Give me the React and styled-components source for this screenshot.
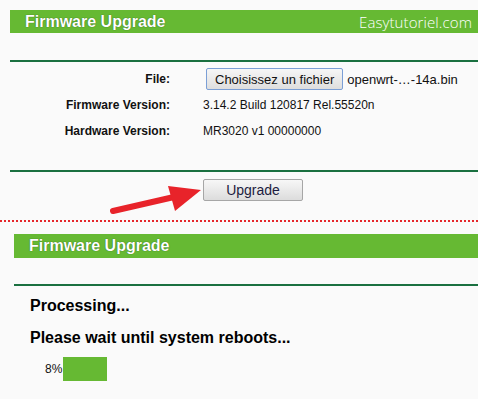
import React from 'react';
import styled, { createGlobalStyle } from 'styled-components';

const GlobalStyle = createGlobalStyle`
  body {
    margin: 0;
    background: #fafafa;
    font-family: "Liberation Sans", Arial, sans-serif;
  }
`;

const Page = styled.div`
  position: relative;
  width: 478px;
  height: 399px;
  overflow: hidden;
`;

const Panel = styled.section`
  margin-left: ${({ indent }) => indent}px;
  padding-top: ${({ top }) => top}px;
`;

const Header = styled.div`
  display: flex;
  align-items: center;
  justify-content: space-between;
  height: ${({ tall }) => (tall ? 24 : 23)}px;
  padding: 0 6px 0 15px;
  background: #66b933;
  color: #fff;
  margin-bottom: ${({ gap }) => gap}px;
`;

const Title = styled.h2`
  margin: 0;
  font-size: 16px;
  font-weight: 700;
  text-shadow: 0 0 1px #1c4a10;
`;

const Brand = styled.span`
  font-family: "Open Sans", "Noto Sans", sans-serif;
  font-size: 15px;
  font-weight: 300;
  letter-spacing: 0.1px;
`;

const Rule = styled.hr`
  margin: 0;
  border: 0;
  border-top: 2px solid #1a7040;
`;

const Form = styled.div`
  display: grid;
  grid-template-columns: 160px 1fr;
  grid-auto-rows: 26px;
  column-gap: 33px;
  align-items: center;
  padding-top: 4px;
  margin-bottom: 26px;
`;

const Label = styled.span`
  text-align: right;
  font-size: 12px;
  font-weight: 700;
  color: #111;
`;

const Value = styled.span`
  font-size: 12px;
  color: #111;
  display: flex;
  align-items: center;
  gap: 4px;
`;

const FileButton = styled.button`
  height: 22px;
  margin-left: 3px;
  padding: 0 8px;
  font-family: "Liberation Sans", Arial, sans-serif;
  font-size: 13px;
  color: #111;
  border: 1px solid #7b9fd6;
  border-radius: 2px;
  background: linear-gradient(#f6f6f6, #dedede);
`;

const FileName = styled.span`
  font-size: 13px;
  color: #111;
`;

const ActionRow = styled.div`
  padding: 7px 0 0 193px;
  height: 48px;
  box-sizing: border-box;
`;

const UpgradeButton = styled.button`
  width: 100px;
  height: 22px;
  font-family: "Liberation Sans", Arial, sans-serif;
  font-size: 14px;
  color: #1c1c40;
  border: 1px solid #a6a6a6;
  border-radius: 2px;
  background: linear-gradient(#f7f7f7, #dcdcdc);
`;

const Dotted = styled.div`
  border-top: 2px dotted #e5262b;
`;

const Status = styled.p`
  margin: ${({ gap }) => gap}px 0 0 16px;
  font-size: 16px;
  font-weight: 700;
  line-height: 18px;
  color: #000;
`;

const Progress = styled.div`
  display: flex;
  align-items: center;
  margin: 10px 0 0 31px;
  height: 24px;
  font-size: 12px;
  color: #111;
`;

const Bar = styled.div`
  height: 24px;
  margin-left: 1px;
  background: #66b933;
`;

const Arrow = styled.svg`
  position: absolute;
  left: 100px;
  top: 176px;
`;

export default function App() {
  const percent = 8;
  return (
    <Page>
      <GlobalStyle />
      <Panel indent={10} top={10}>
        <Header gap={27}>
          <Title>Firmware Upgrade</Title>
          <Brand>Easytutoriel.com</Brand>
        </Header>
        <Rule />
        <Form>
          <Label>File:</Label>
          <Value>
            <FileButton>Choisissez un fichier</FileButton>
            <FileName>openwrt-…-14a.bin</FileName>
          </Value>
          <Label>Firmware Version:</Label>
          <Value>3.14.2 Build 120817 Rel.55520n</Value>
          <Label>Hardware Version:</Label>
          <Value>MR3020 v1 00000000</Value>
        </Form>
        <Rule />
        <ActionRow>
          <UpgradeButton>Upgrade</UpgradeButton>
        </ActionRow>
      </Panel>
      <Dotted />
      <Panel indent={14} top={12}>
        <Header tall gap={26}>
          <Title>Firmware Upgrade</Title>
        </Header>
        <Rule />
        <Status gap={11}>Processing...</Status>
        <Status gap={14}>Please wait until system reboots...</Status>
        <Progress>
          8%
          <Bar style={{ width: percent * 5.5 }} />
        </Progress>
      </Panel>
      <Arrow width="110" height="44" viewBox="100 176 110 44">
        <line x1="113" y1="211" x2="174" y2="197" stroke="#e8232a" strokeWidth="6" strokeLinecap="round" />
        <polygon points="201,190 168,186 175,211" fill="#e8232a" />
      </Arrow>
    </Page>
  );
}
